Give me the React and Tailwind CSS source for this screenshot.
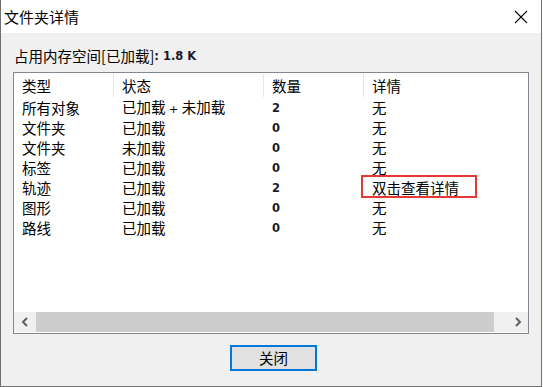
const cjk = "font-['Noto_Sans_CJK_SC',sans-serif]";
const num = "font-['DejaVu_Sans',sans-serif]";

const rows = [
  { type: "所有对象", state: "已加载 + 未加载", count: 2, detail: "无" },
  { type: "文件夹", state: "已加载", count: 0, detail: "无" },
  { type: "文件夹", state: "未加载", count: 0, detail: "无" },
  { type: "标签", state: "已加载", count: 0, detail: "无" },
  { type: "轨迹", state: "已加载", count: 2, detail: "双击查看详情", marked: true },
  { type: "图形", state: "已加载", count: 0, detail: "无" },
  { type: "路线", state: "已加载", count: 0, detail: "无" },
];

function StateText({ text }) {
  const parts = text.split(" + ");
  if (parts.length === 1) return <span>{text}</span>;
  return (
    <span>
      {parts[0]}
      <span className={`${num} text-[11px]`}> + </span>
      {parts[1]}
    </span>
  );
}

export default function App() {
  return (
    <div className="w-[543px] h-[387px] bg-white overflow-hidden">
      <div className="w-[542px] h-[387px] flex flex-col bg-[#f0f0f0] border-x border-b border-[#707070] text-black">
        {/* title bar */}
        <div className="h-[33px] shrink-0 bg-white flex items-center justify-between pl-[3px] pr-[13px]">
          <span className={`${cjk} text-[15px] leading-[20px]`}>文件夹详情</span>
          <svg width="14" height="14" viewBox="0 0 14 14">
            <path d="M1 1 L13 13 M13 1 L1 13" stroke="#000" strokeWidth="1.1" fill="none" />
          </svg>
        </div>

        {/* memory label */}
        <div className="pt-[13px] pl-[13px] h-[33px] shrink-0 flex items-center">
          <span className={`${cjk} text-[14.5px] leading-[20px]`}>占用内存空间[已加载]</span>
          <span className={`${num} text-[11.5px] leading-[20px] font-bold text-[#1a1a2a]`}>: 1.8 K</span>
        </div>

        {/* list view */}
        <div className="mt-[6px] ml-[12px] w-[516px] h-[262px] shrink-0 border border-[#828790] bg-white flex flex-col">
          <div className={`${cjk} text-[14.5px] flex h-[25px] shrink-0`}>
            <div className="w-[100px] pl-[8px] flex items-center my-[1px] border-r border-[#e5e5e5]">类型</div>
            <div className="w-[150px] pl-[8px] flex items-center my-[1px] border-r border-[#e5e5e5]">状态</div>
            <div className="w-[100px] pl-[8px] flex items-center my-[1px] border-r border-[#e5e5e5]">数量</div>
            <div className="flex-1 pl-[8px] flex items-center my-[1px]">详情</div>
          </div>

          {rows.map((r, i) => (
            <div key={i} className={`${cjk} text-[14.5px] flex h-[20px] items-center leading-[20px]`}>
              <div className="w-[100px] pl-[8px]">{r.type}</div>
              <div className="w-[150px] pl-[8px]">
                <StateText text={r.state} />
              </div>
              <div className={`w-[100px] pl-[8px] ${num} text-[11.5px] font-bold text-[#1a1a2a]`}>{r.count}</div>
              <div className="flex-1 pl-[8px] relative">
                <span>{r.detail}</span>
                {r.marked && (
                  <div className="absolute left-[-3px] top-[-3px] w-[116px] h-[23px] border-2 border-[#e53935]" />
                )}
              </div>
            </div>
          ))}

          <div className="flex-1" />

          {/* horizontal scrollbar */}
          <div className="h-[20px] mb-[1px] shrink-0 flex bg-[#f0f0f0]">
            <div className="w-[21px] flex items-center justify-center">
              <svg width="8" height="10" viewBox="0 0 8 10">
                <path d="M6 1 L2 5 L6 9" stroke="#606060" strokeWidth="2" fill="none" />
              </svg>
            </div>
            <div className="flex-1 flex">
              <div className="ml-[1px] w-[458px] bg-[#cdcdcd]" />
            </div>
            <div className="w-[21px] flex items-center justify-center">
              <svg width="8" height="10" viewBox="0 0 8 10">
                <path d="M2 1 L6 5 L2 9" stroke="#606060" strokeWidth="2" fill="none" />
              </svg>
            </div>
          </div>
        </div>

        {/* close button */}
        <div className="mt-[11px] ml-[229px]">
          <button
            className={`${cjk} w-[87px] h-[26px] border-2 border-[#0078d7] bg-[#e1e1e1] text-[14.5px] leading-[20px] flex items-center justify-center`}
          >
            关闭
          </button>
        </div>
      </div>
    </div>
  );
}
